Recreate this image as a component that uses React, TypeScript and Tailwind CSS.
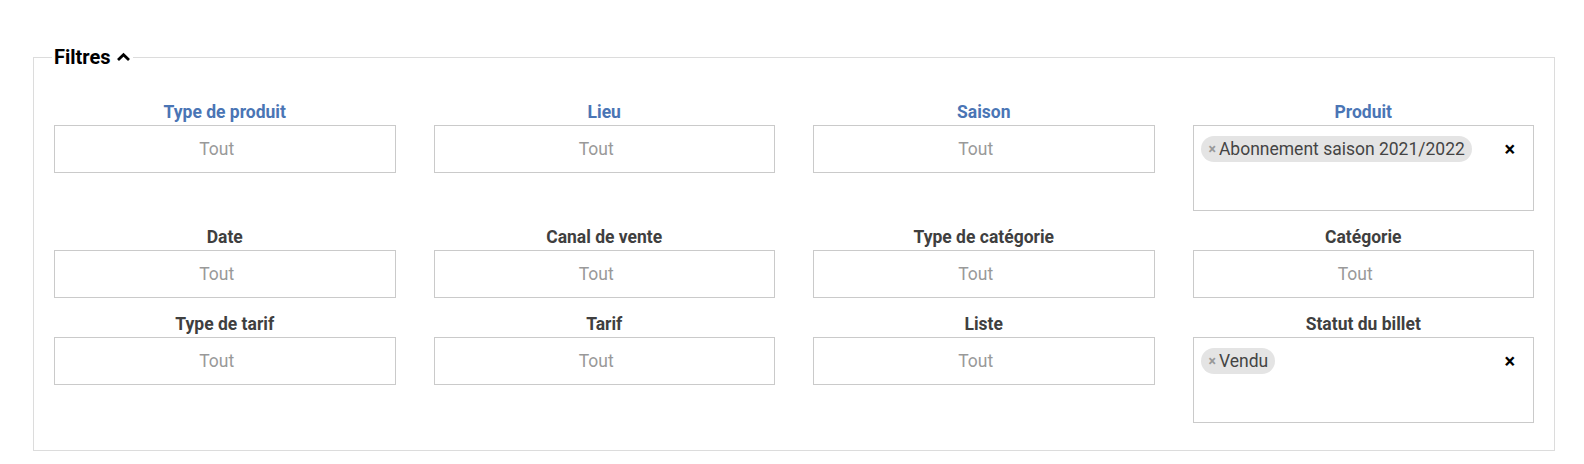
import React from "react";

type Field = { label: string; blue?: boolean; chip?: string };

const fields: Field[] = [
  { label: "Type de produit", blue: true },
  { label: "Lieu", blue: true },
  { label: "Saison", blue: true },
  { label: "Produit", blue: true, chip: "Abonnement saison 2021/2022" },
  { label: "Date" },
  { label: "Canal de vente" },
  { label: "Type de catégorie" },
  { label: "Catégorie" },
  { label: "Type de tarif" },
  { label: "Tarif" },
  { label: "Liste" },
  { label: "Statut du billet", chip: "Vendu" },
];

function Cell({ f }: { f: Field }) {
  return (
    <div className="flex flex-col">
      <div
        className={
          "text-center text-[17.5px] font-bold leading-6 mb-px " +
          (f.blue ? "text-[#4a75b5]" : "text-[#3f3f3f]")
        }
      >
        {f.label}
      </div>
      {f.chip ? (
        <div className="relative h-[86px] border border-[#cacaca] bg-white pl-[7px] pt-[10px]">
          <span className="inline-flex h-[26px] items-center rounded-[13px] bg-[#e4e4e4] pl-[8px] pr-[7px] text-[17.5px] text-[#444]">
            <span className="mr-[3px] text-[14px] font-bold text-[#999]">×</span>
            {f.chip}
          </span>
          <span className="absolute right-[18px] top-[11px] text-[20px] font-bold leading-6 text-black">
            ×
          </span>
        </div>
      ) : (
        <div className="flex h-[48px] items-center justify-center border border-[#cacaca] bg-white pr-[16px] text-[17.5px] text-[#999]">
          Tout
        </div>
      )}
    </div>
  );
}

export default function App() {
  return (
    <div
      className="bg-white pt-[45px] pl-[33px]"
      style={{ fontFamily: "Roboto, 'Liberation Sans', sans-serif" }}
    >
      <fieldset className="w-[1522px] border border-[#dcdcdc] px-[20px] pb-[27px]">
        <legend className="-ml-[2px] flex items-center px-[2px] text-[20px] font-bold leading-6 text-black">
          Filtres
          <svg
            width="15"
            height="10"
            viewBox="0 0 15 10"
            className="ml-[5px]"
          >
            <polyline
              points="2,8 7.5,2.8 13,8"
              fill="none"
              stroke="black"
              strokeWidth="2.8"
            />
          </svg>
        </legend>
        <div className="mt-[31px] grid grid-cols-4 gap-x-[38px] gap-y-[14px] items-start">
          {fields.map((f) => (
            <Cell key={f.label} f={f} />
          ))}
        </div>
      </fieldset>
    </div>
  );
}
